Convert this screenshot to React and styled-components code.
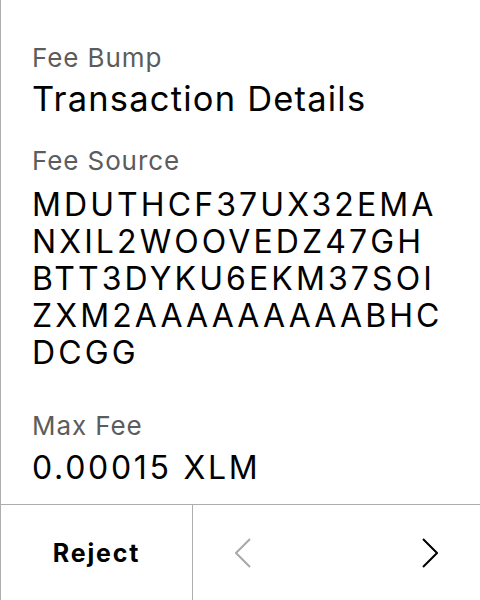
import React from 'react';
import styled, {createGlobalStyle} from 'styled-components';

const GlobalStyle = createGlobalStyle`
    *, *::before, *::after {
        box-sizing: border-box;
    }
    html, body {
        margin: 0;
        padding: 0;
        background: #fff;
    }
    body {
        font-family: Inter, "Liberation Sans", sans-serif;
    }
`

const Screen = styled.div`
    width: 480px;
    height: 600px;
    border-left: 1px solid #adadad;
    display: flex;
    flex-direction: column;
    overflow: hidden;
`
const Body = styled.div`
    flex: 1;
    padding: 42px 36px 0 31px;
    display: flex;
    flex-direction: column;
`
const Section = styled.div`
    display: flex;
    flex-direction: column;
    gap: ${p => p.gap}px;
    margin-bottom: ${p => p.space}px;
`
const Label = styled.div`
    font-size: 26px;
    line-height: 31px;
    letter-spacing: 0.9px;
    color: #5c5c5c;
`
const Title = styled.div`
    font-size: 34.5px;
    line-height: 40px;
    letter-spacing: 1.2px;
    color: #000;
    white-space: nowrap;
`
const Address = styled.div`
    font-size: 32px;
    line-height: 37px;
    letter-spacing: 3.1px;
    color: #000;
    word-break: break-all;
`
const Value = styled.div`
    font-size: 32px;
    line-height: 37px;
    letter-spacing: 2.7px;
    color: #000;
`
const Footer = styled.div`
    height: 96px;
    flex-shrink: 0;
    border-top: 1px solid #adadad;
    display: flex;
`
const RejectButton = styled.button`
    width: 192px;
    border: none;
    border-right: 1px solid #adadad;
    background: none;
    font-family: Inter, sans-serif;
    font-size: 25px;
    font-weight: 700;
    letter-spacing: 1.8px;
    color: #000;
    padding: 0;
`
const Pager = styled.div`
    flex: 1;
    display: flex;
    align-items: center;
    justify-content: space-between;
    padding: 0 42px;
`
const Arrow = styled.svg`
    width: 16px;
    height: 30px;
    stroke: ${p => p.disabled ? '#a9a9a9' : '#000'};
`

const Chevron = ({dir, disabled}) => (
    <Arrow viewBox="0 0 16 30" disabled={disabled} fill="none" strokeWidth="2">
        {dir === 'left'
            ? <polyline points="15,1 1,15 15,29"/>
            : <polyline points="1,1 15,15 1,29"/>}
    </Arrow>
)

export default function App() {
    return (
        <>
            <GlobalStyle/>
            <Screen>
                <Body>
                    <Section gap={6} space={26}>
                        <Label>Fee Bump</Label>
                        <Title>Transaction Details</Title>
                    </Section>
                    <Section gap={10} space={39}>
                        <Label>Fee Source</Label>
                        <Address>MDUTHCF37UX32EMANXIL2WOOVEDZ47GHBTT3DYKU6EKM37SOIZXM2AAAAAAAAABHCDCGG</Address>
                    </Section>
                    <Section gap={8} space={0}>
                        <Label>Max Fee</Label>
                        <Value>0.00015 XLM</Value>
                    </Section>
                </Body>
                <Footer>
                    <RejectButton>Reject</RejectButton>
                    <Pager>
                        <Chevron dir="left" disabled/>
                        <Chevron dir="right"/>
                    </Pager>
                </Footer>
            </Screen>
        </>
    );
}
